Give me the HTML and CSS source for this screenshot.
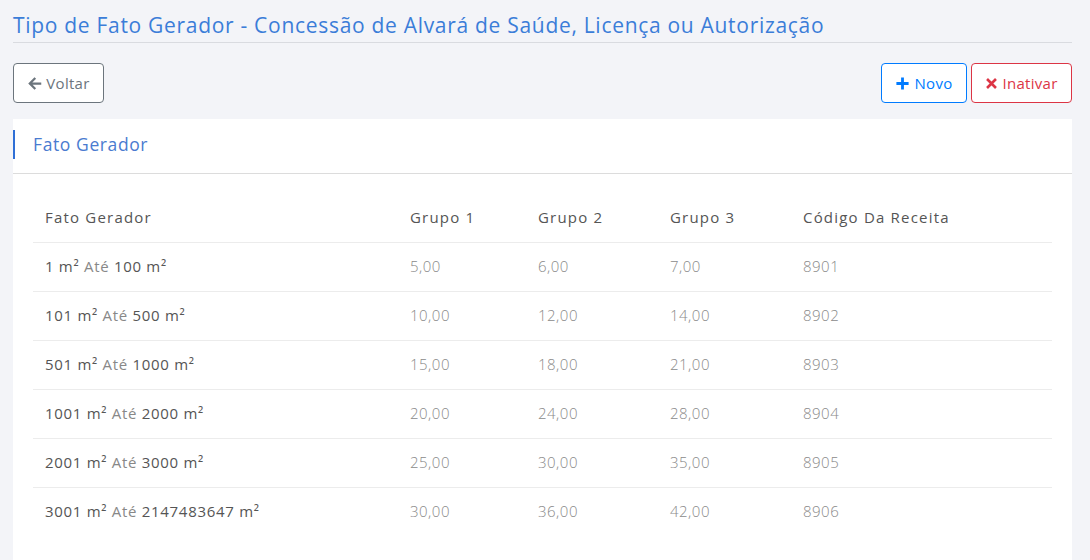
FILE: index.html
```html
<!DOCTYPE html>
<html lang="pt">
<head>
<meta charset="utf-8">
<title>Tipo de Fato Gerador</title>
<link rel="stylesheet" href="styles.css">
</head>
<body>
<div class="page">
  <h1 class="title">Tipo de Fato Gerador - Concessão de Alvará de Saúde, Licença ou Autorização</h1>
  <div class="toolbar">
    <button class="btn btn-back">
      <svg class="ico" viewBox="0 0 16 16" width="15" height="15"><path d="M14 8H3.5M8 3L3 8l5 5" fill="none" stroke="currentColor" stroke-width="2.4" stroke-linecap="square"/></svg>Voltar
    </button>
    <div class="actions">
      <button class="btn btn-new">
        <svg class="ico" viewBox="0 0 16 16" width="15" height="15"><path d="M8 1.5v13M1.5 8h13" fill="none" stroke="currentColor" stroke-width="3"/></svg>Novo
      </button>
      <button class="btn btn-del">
        <svg class="ico" viewBox="0 0 16 16" width="13" height="13"><path d="M2.5 2.5l11 11M13.5 2.5l-11 11" fill="none" stroke="currentColor" stroke-width="3.2"/></svg>Inativar
      </button>
    </div>
  </div>
  <div class="card">
    <div class="card-header"><span class="card-title">Fato Gerador</span></div>
    <div class="card-body">
      <table class="grid">
        <thead>
          <tr><th class="c1">Fato Gerador</th><th class="c2">Grupo 1</th><th class="c3">Grupo 2</th><th class="c4">Grupo 3</th><th>Código Da Receita</th></tr>
        </thead>
        <tbody>
          <tr><td class="f">1 m² <span class="ate">Até</span> 100 m²</td><td class="v">5,00</td><td class="v">6,00</td><td class="v">7,00</td><td class="v">8901</td></tr>
          <tr><td class="f">101 m² <span class="ate">Até</span> 500 m²</td><td class="v">10,00</td><td class="v">12,00</td><td class="v">14,00</td><td class="v">8902</td></tr>
          <tr><td class="f">501 m² <span class="ate">Até</span> 1000 m²</td><td class="v">15,00</td><td class="v">18,00</td><td class="v">21,00</td><td class="v">8903</td></tr>
          <tr><td class="f">1001 m² <span class="ate">Até</span> 2000 m²</td><td class="v">20,00</td><td class="v">24,00</td><td class="v">28,00</td><td class="v">8904</td></tr>
          <tr><td class="f">2001 m² <span class="ate">Até</span> 3000 m²</td><td class="v">25,00</td><td class="v">30,00</td><td class="v">35,00</td><td class="v">8905</td></tr>
          <tr><td class="f">3001 m² <span class="ate">Até</span> 2147483647 m²</td><td class="v">30,00</td><td class="v">36,00</td><td class="v">42,00</td><td class="v">8906</td></tr>
        </tbody>
      </table>
    </div>
  </div>
</div>
</body>
</html>
```
FILE: styles.css
```css
* { box-sizing: border-box; }
html, body { margin: 0; padding: 0; }
body {
  background: #f3f4f8;
  font-family: "Open Sans", "Noto Sans", sans-serif;
  color: #555;
}
.page {
  padding: 0 18px 0 13px;
}
.title {
  margin: 0;
  padding-top: 12px;
  padding-bottom: 3px;
  font-size: 21px;
  line-height: 27px;
  font-weight: 400;
  letter-spacing: 0.7px;
  color: #3b7dd8;
  border-bottom: 1px solid #d9dbe0;
}
.toolbar {
  display: flex;
  justify-content: space-between;
  align-items: center;
  margin-top: 20px;
}
.actions { display: flex; gap: 4px; }
.btn {
  display: inline-flex;
  align-items: center;
  justify-content: center;
  gap: 4px;
  height: 40px;
  background: #fff;
  border: 1px solid;
  border-radius: 4px;
  font-family: inherit;
  font-size: 15px;
  letter-spacing: 0.3px;
  padding: 0 10px;
  cursor: pointer;
}
.btn-back { color: #6c757d; border-color: #6c757d; width: 91px; }
.btn-new { color: #007bff; border-color: #007bff; width: 86px; }
.btn-del { color: #dc3545; border-color: #dc3545; width: 101px; }
.ico { flex: none; }
.card {
  margin-top: 16px;
  background: #fff;
  height: 460px;
}
.card-header {
  height: 55px;
  border-bottom: 1px solid #dcdcdc;
  padding-top: 11px;
}
.card-title {
  display: block;
  border-left: 2px solid #2f6fd6;
  padding-left: 18px;
  height: 29px;
  line-height: 29px;
  font-size: 17.5px;
  letter-spacing: 0.6px;
  color: #4a7bd0;
}
.card-body { padding: 20px 20px 0; }
.grid {
  width: 100%;
  border-collapse: collapse;
  font-size: 15px;
  letter-spacing: 0.5px;
}
.grid th, .grid td {
  text-align: left;
  padding: 0 0 0 12px;
  height: 49px;
  border-top: 1px solid #ececec;
  white-space: nowrap;
}
.grid th {
  border-top: none;
  height: 48px;
  padding-bottom: 2px;
  font-weight: 400;
  letter-spacing: 1.2px;
  color: #555;
}
.grid .c1 { width: 365px; }
.grid .c2 { width: 128px; }
.grid .c3 { width: 132px; }
.grid .c4 { width: 133px; }
.grid td { color: #555; padding-bottom: 1px; }
.grid td.f { letter-spacing: 0.7px; }
.grid .ate { color: #888; }
.grid td.v { color: #8a8a8a; font-weight: 300; }
```
